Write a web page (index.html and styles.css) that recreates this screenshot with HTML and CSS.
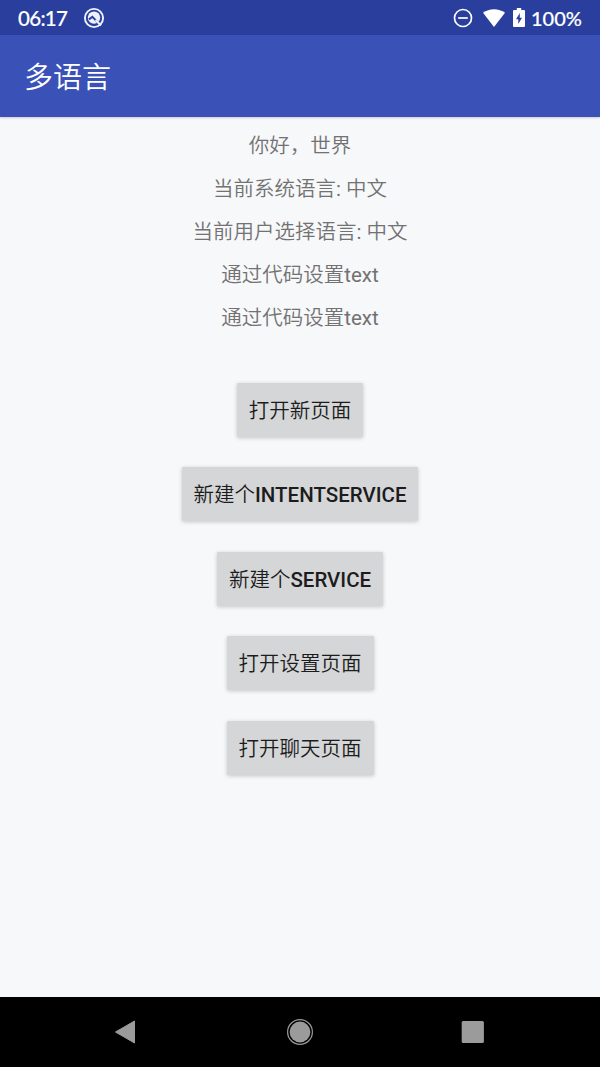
FILE: index.html
```html
<!DOCTYPE html>
<html lang="zh-CN">
<head>
<meta charset="utf-8">
<title>多语言</title>
<link rel="stylesheet" href="styles.css">
</head>
<body>
<div class="screen">
  <header class="status-bar">
    <span class="clock">06:17</span>
    <svg class="app-icon" width="22" height="22" viewBox="0 0 22 22">
      <circle cx="11" cy="11" r="9.1" fill="none" stroke="#eef2ff" stroke-width="1.9"/>
      <circle cx="11" cy="10.6" r="6.2" fill="#eef2ff"/>
      <path d="M6 12.4 9.4 9.8 15.6 16.2" fill="none" stroke="#2b3f9c" stroke-width="2"/>
      <path d="M12.5 13 18 18.5" stroke="#eef2ff" stroke-width="2"/>
    </svg>
    <svg class="dnd" width="20" height="20" viewBox="0 0 20 20" fill="none" stroke="#fff">
      <circle cx="10" cy="10" r="8.5" stroke-width="1.7"/>
      <path d="M5.2 10h9.6" stroke-width="1.7"/>
    </svg>
    <svg class="wifi" width="22" height="18" viewBox="0 0 22 18"><path d="M0 3.8C6-1.1 16-1.1 22 3.8L11 18Z" fill="#fff"/></svg>
    <svg class="battery" width="12" height="19" viewBox="0 0 12 19">
      <path d="M3.8 0h4.4v2H11q1 0 1 1v15q0 1-1 1H1q-1 0-1-1V3q0-1 1-1h2.8Z" fill="#fff"/>
      <path d="M6.8 5 3 11.3h2.3V16L9 9.7H6.8Z" fill="#2b3f9c"/>
    </svg>
    <span class="level">100%</span>
  </header>
  <div class="toolbar"><h1 class="title">多语言</h1></div>
  <main class="content">
    <p class="line">你好，世界</p>
    <p class="line">当前系统语言<span class="regular">: </span>中文</p>
    <p class="line">当前用户选择语言<span class="regular">: </span>中文</p>
    <p class="line">通过代码设置<span class="regular">text</span></p>
    <p class="line">通过代码设置<span class="regular">text</span></p>
    <div class="actions">
      <button class="btn">打开新页面</button>
      <button class="btn">新建个<span class="latin">INTENTSERVICE</span></button>
      <button class="btn">新建个<span class="latin">SERVICE</span></button>
      <button class="btn">打开设置页面</button>
      <button class="btn">打开聊天页面</button>
    </div>
  </main>
  <nav class="nav-bar">
    <svg width="28" height="28" viewBox="0 0 28 28"><path d="M4.5 14 23.5 3V25Z" fill="#9b9b9b" stroke="#9b9b9b" stroke-linejoin="round"/></svg>
    <svg width="28" height="28" viewBox="0 0 28 28"><circle cx="15" cy="14" r="10.4" fill="#9b9b9b"/><circle cx="15" cy="14" r="12.4" fill="none" stroke="#9b9b9b" stroke-width="1.2"/></svg>
    <svg width="28" height="28" viewBox="0 0 28 28"><rect x="2.7" y="3" width="22.2" height="22" rx="1.5" fill="#9b9b9b"/></svg>
  </nav>
</div>
</body>
</html>
```
FILE: styles.css
```css
body {
  margin: 0;
  font-family: Roboto, "Noto Sans CJK SC", sans-serif;
}
.screen {
  width: 600px;
  height: 1067px;
  display: flex;
  flex-direction: column;
  overflow: hidden;
  background: #f7f8fa;
}
.status-bar {
  height: 35px;
  flex: none;
  box-sizing: border-box;
  padding: 0 17px 0 18px;
  display: flex;
  align-items: center;
  background: #2a3f9d;
  color: #fff;
  font: 500 20px/35px Lato, "Open Sans", sans-serif;
}
.clock {
  width: 65px;
  padding-top: 1px;
  font-size: 20.5px;
  letter-spacing: -.7px;
  -webkit-text-stroke: .15px #fff;
}
.dnd {
  margin-left: auto;
}
.wifi {
  margin-left: 10px;
}
.battery {
  margin-left: 8px;
}
.level {
  width: 52px;
  margin-left: 6px;
  padding-top: 1px;
  -webkit-text-stroke: .15px #fff;
}
.toolbar {
  height: 82px;
  box-sizing: border-box;
  flex: none;
  display: flex;
  align-items: center;
  padding: 4px 0 0 24px;
  background: #3a52b7;
  box-shadow: 0 1px 2px rgba(0, 0, 0, .18);
}
.title {
  margin: 0;
  color: #fff;
  font-size: 29px;
  font-weight: 350;
  line-height: 40px;
}
.content {
  flex: 1;
  padding-top: 8px;
  text-align: center;
}
.line {
  margin: 0;
  height: 43px;
  color: #727272;
  font-size: 20.5px;
  font-weight: 350;
  line-height: 43px;
}
.regular {
  font-weight: 400;
}
.actions {
  display: flex;
  flex-direction: column;
  align-items: center;
  gap: 30.6px;
  padding-top: 42.5px;
}
.btn {
  height: 54px;
  padding: 2px 12px 0;
  border: 0;
  border-radius: 1px;
  background: #d5d6d7;
  color: #1c1c1c;
  font: 350 20.5px/52px Roboto, "Noto Sans CJK SC", sans-serif;
  box-shadow: 0 1px 4px rgba(0, 0, 0, .2);
}
.latin {
  font-weight: 500;
}
.nav-bar {
  height: 70px;
  flex: none;
  display: flex;
  justify-content: space-between;
  align-items: center;
  box-sizing: border-box;
  padding: 0 113px 0 111px;
  background: #000;
}
```
